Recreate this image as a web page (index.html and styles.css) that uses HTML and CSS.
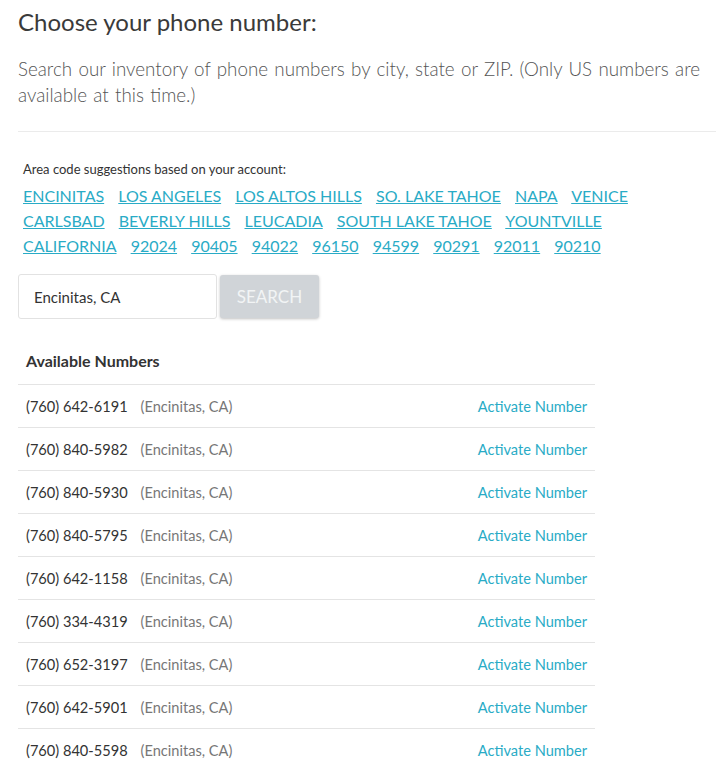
FILE: index.html
```html
<!DOCTYPE html>
<html lang="en">
<head>
    <meta charset="UTF-8">
    <meta name="viewport" content="width=device-width, initial-scale=1.0">
    <title>Choose your phone number</title>
    <link rel="stylesheet" href="styles.css">
</head>
<body>
    <div class="container">
        <h1>Choose your phone number:</h1>
        <p class="intro">Search our inventory of phone numbers by city, state or ZIP. (Only US numbers are available at this time.)</p>
        <hr class="divider">

        <div class="suggestions">
            <div class="suggestions-label">Area code suggestions based on your account:</div>
            <div class="suggestion-links">
                <a href="#">ENCINITAS</a>
                <a href="#">LOS ANGELES</a>
                <a href="#">LOS ALTOS HILLS</a>
                <a href="#">SO. LAKE TAHOE</a>
                <a href="#">NAPA</a>
                <a href="#">VENICE</a>
                <a href="#">CARLSBAD</a>
                <a href="#">BEVERLY HILLS</a>
                <a href="#">LEUCADIA</a>
                <a href="#">SOUTH LAKE TAHOE</a>
                <a href="#">YOUNTVILLE</a>
                <a href="#">CALIFORNIA</a>
                <a href="#">92024</a>
                <a href="#">90405</a>
                <a href="#">94022</a>
                <a href="#">96150</a>
                <a href="#">94599</a>
                <a href="#">90291</a>
                <a href="#">92011</a>
                <a href="#">90210</a>
            </div>
        </div>

        <form class="search-form">
            <input type="text" class="search-input" value="Encinitas, CA">
            <button type="button" class="search-btn" disabled>SEARCH</button>
        </form>

        <table class="numbers">
            <thead>
                <tr><th colspan="2">Available Numbers</th></tr>
            </thead>
            <tbody>
                <tr><td><span class="phone">(760) 642-6191</span><span class="city">(Encinitas, CA)</span></td><td class="action"><a href="#">Activate Number</a></td></tr>
                <tr><td><span class="phone">(760) 840-5982</span><span class="city">(Encinitas, CA)</span></td><td class="action"><a href="#">Activate Number</a></td></tr>
                <tr><td><span class="phone">(760) 840-5930</span><span class="city">(Encinitas, CA)</span></td><td class="action"><a href="#">Activate Number</a></td></tr>
                <tr><td><span class="phone">(760) 840-5795</span><span class="city">(Encinitas, CA)</span></td><td class="action"><a href="#">Activate Number</a></td></tr>
                <tr><td><span class="phone">(760) 642-1158</span><span class="city">(Encinitas, CA)</span></td><td class="action"><a href="#">Activate Number</a></td></tr>
                <tr><td><span class="phone">(760) 334-4319</span><span class="city">(Encinitas, CA)</span></td><td class="action"><a href="#">Activate Number</a></td></tr>
                <tr><td><span class="phone">(760) 652-3197</span><span class="city">(Encinitas, CA)</span></td><td class="action"><a href="#">Activate Number</a></td></tr>
                <tr><td><span class="phone">(760) 642-5901</span><span class="city">(Encinitas, CA)</span></td><td class="action"><a href="#">Activate Number</a></td></tr>
                <tr><td><span class="phone">(760) 840-5598</span><span class="city">(Encinitas, CA)</span></td><td class="action"><a href="#">Activate Number</a></td></tr>
            </tbody>
        </table>
    </div>
</body>
</html>
```

FILE: styles.css
```css
body {
    font-family: Lato, 'Open Sans', sans-serif;
    margin: 0;
    padding: 0;
    background: #fff;
    color: #333;
}

.container {
    padding: 0 8px 0 18px;
}

h1 {
    font-size: 24px;
    font-weight: 400;
    line-height: 30px;
    margin: 7px 0 0;
    color: #3a3a3a;
}

.intro {
    font-size: 18.8px;
    font-weight: 300;
    line-height: 26px;
    word-spacing: 1.2px;
    color: #555;
    margin: 19px 0 0;
}

.divider {
    border: none;
    border-top: 1px solid #ebebeb;
    margin: 23px 0 0;
}

.suggestions {
    padding: 0 5px;
    margin-top: 28px;
}

.suggestions-label {
    font-size: 13px;
    line-height: 18px;
    color: #333;
}

.suggestion-links {
    margin-top: 5px;
    font-size: 16px;
    line-height: 25px;
}

.suggestion-links a {
    color: #29abc6;
    margin-right: 10px;
}

.search-form {
    display: flex;
    align-items: center;
    gap: 3px;
    margin-top: 16px;
}

.search-input {
    width: 199px;
    height: 45px;
    box-sizing: border-box;
    border: 1px solid #e2e2e2;
    border-radius: 3px;
    padding: 0 15px;
    font-family: inherit;
    font-size: 15px;
    color: #333;
}

.search-btn {
    width: 99px;
    height: 43px;
    border: none;
    border-radius: 3px;
    background: #d0d4d8;
    color: #f2f4f5;
    font-family: inherit;
    font-size: 17px;
    box-shadow: 0 1px 3px rgba(0, 0, 0, 0.25);
}

.numbers {
    width: 577px;
    border-collapse: collapse;
    margin-top: 23px;
    font-size: 14.6px;
}

.numbers th {
    text-align: left;
    font-size: 16px;
    font-weight: 700;
    color: #333;
    padding: 8px 8px 12px;
    line-height: 22px;
}

.numbers td {
    border-top: 1px solid #e4e4e4;
    height: 42px;
    padding: 0 8px;
}

.phone {
    color: #333;
}

.city {
    color: #777;
    margin-left: 13px;
}

.action {
    text-align: right;
}

.action a {
    color: #29abc6;
    text-decoration: none;
}
```
